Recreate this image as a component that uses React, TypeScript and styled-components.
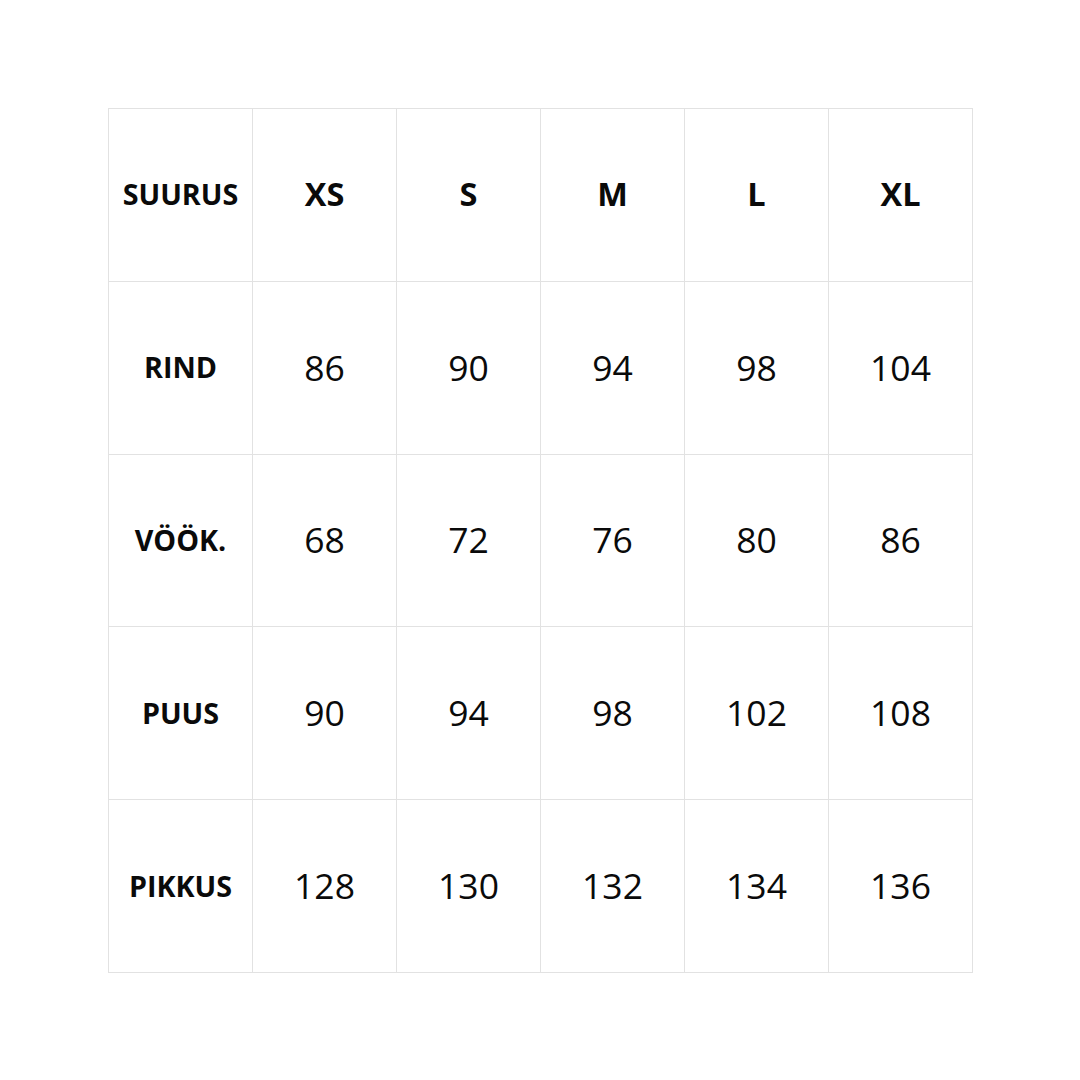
import React from "react";
import styled, { createGlobalStyle } from "styled-components";

const Global = createGlobalStyle`
  html, body { margin: 0; padding: 0; background: #ffffff; }
  body { font-family: "Open Sans", "Liberation Sans", sans-serif; color: #0a0a0a; }
`;

const Page = styled.div`
  width: 1080px;
  height: 1080px;
  display: flex;
  align-items: flex-start;
  justify-content: flex-start;
  padding: 108px 0 0 108px;
  box-sizing: border-box;
`;

const Grid = styled.div`
  display: grid;
  grid-template-columns: repeat(6, 144px);
  grid-template-rows: repeat(5, 172.8px);
  border-left: 1px solid #e2e2e2;
  border-top: 1px solid #e2e2e2;
`;

const Cell = styled.div<{ $kind: "label" | "size" | "value" }>`
  box-sizing: border-box;
  border-right: 1px solid #e2e2e2;
  border-bottom: 1px solid #e2e2e2;
  display: flex;
  align-items: center;
  justify-content: center;
  padding-bottom: 2px;
  color: #0a0a0a;
  font-weight: ${(p) => (p.$kind === "value" ? 400 : 700)};
  font-size: ${(p) => (p.$kind === "label" ? "28.7px" : p.$kind === "size" ? "32.5px" : "35.5px")};
`;

const sizes = ["XS", "S", "M", "L", "XL"];
const rows: [string, number[]][] = [
  ["RIND", [86, 90, 94, 98, 104]],
  ["VÖÖK.", [68, 72, 76, 80, 86]],
  ["PUUS", [90, 94, 98, 102, 108]],
  ["PIKKUS", [128, 130, 132, 134, 136]],
];

export default function App() {
  return (
    <>
      <Global />
      <Page>
        <Grid>
          <Cell $kind="label">SUURUS</Cell>
          {sizes.map((s) => (
            <Cell key={s} $kind="size">{s}</Cell>
          ))}
          {rows.map(([label, vals]) => (
            <React.Fragment key={label}>
              <Cell $kind="label">{label}</Cell>
              {vals.map((v, i) => (
                <Cell key={i} $kind="value">{v}</Cell>
              ))}
            </React.Fragment>
          ))}
        </Grid>
      </Page>
    </>
  );
}
